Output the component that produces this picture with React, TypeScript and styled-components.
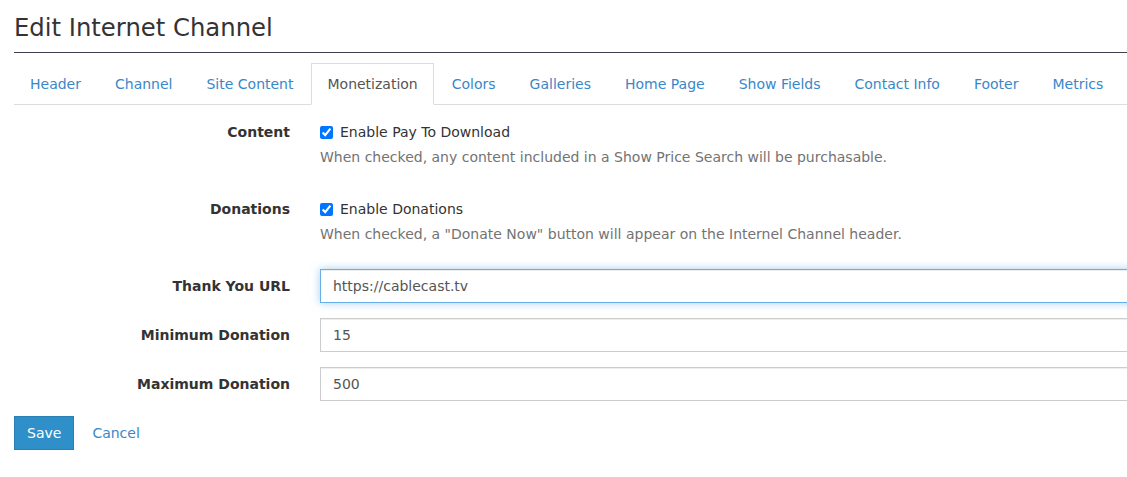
import React, { useEffect, useRef } from "react";
import styled, { createGlobalStyle } from "styled-components";

const GlobalStyle = createGlobalStyle`
  html, body {
    margin: 0;
    padding: 0;
    overflow: hidden;
    background: #fff;
  }
  body {
    font-family: "DejaVu Sans", Verdana, sans-serif;
    font-size: 14px;
    line-height: 20px;
    color: #333;
  }
`;

const tabs = [
  "Header",
  "Channel",
  "Site Content",
  "Monetization",
  "Colors",
  "Galleries",
  "Home Page",
  "Show Fields",
  "Contact Info",
  "Footer",
  "Metrics",
];

const Page = styled.div`
  width: 1180px;
  padding: 0 0 0 14px;
`;

const Title = styled.h1`
  margin: 0;
  padding: 14px 0 10px;
  font-size: 24.3px;
  line-height: 28px;
  font-weight: normal;
  color: #333;
  border-bottom: 1px solid #3f3f4d;
`;

const TabList = styled.ul`
  display: flex;
  list-style: none;
  margin: 10px 0 0;
  padding: 0;
  border-bottom: 1px solid #ddd;
`;

const Tab = styled.li<{ $active?: boolean }>`
  margin: 0 2px -1px 0;
  padding: 10px 15px;
  border: 1px solid ${(p) => (p.$active ? "#ddd" : "transparent")};
  border-bottom-color: ${(p) => (p.$active ? "#fff" : "transparent")};
  background: ${(p) => (p.$active ? "#fff" : "transparent")};
  color: ${(p) => (p.$active ? "#555" : "#3a87c8")};
  white-space: nowrap;
`;

const Form = styled.form`
  padding-top: 17px;
`;

const Row = styled.div<{ $gap: number }>`
  display: grid;
  grid-template-columns: 276px 1fr;
  column-gap: 30px;
  align-items: start;
  margin-bottom: ${(p) => p.$gap}px;
`;

const Label = styled.label<{ $input?: boolean }>`
  text-align: right;
  font-weight: bold;
  font-size: 14px;
  padding-top: ${(p) => (p.$input ? "7px" : "0")};
  line-height: 20px;
`;

const CheckLine = styled.label`
  display: flex;
  align-items: center;
  gap: 7px;
`;

const Check = styled.input`
  width: 13px;
  height: 13px;
  margin: 0;
`;

const Help = styled.div`
  margin-top: 5px;
  color: #737373;
`;

const TextInput = styled.input<{ $focused?: boolean }>`
  box-sizing: border-box;
  width: 100%;
  height: 34px;
  padding: 6px 12px;
  font: inherit;
  color: #555;
  border: 1px solid ${(p) => (p.$focused ? "#66afe9" : "#ccc")};
  border-radius: 0;
  outline: none;
  box-shadow: ${(p) =>
    p.$focused
      ? "inset 0 1px 1px rgba(0,0,0,.075), 0 0 8px rgba(102,175,233,.6)"
      : "inset 0 1px 1px rgba(0,0,0,.075)"};
`;

const Actions = styled.div`
  display: flex;
  align-items: center;
  gap: 18px;
`;

const SaveButton = styled.button`
  height: 34px;
  padding: 6px 12px;
  font: inherit;
  color: #fff;
  background: #2f8fc8;
  border: 1px solid #2a7fb3;
  border-radius: 0;
`;

const CancelLink = styled.a`
  color: #3a87c8;
  text-decoration: none;
`;

export default function App() {
  const urlRef = useRef<HTMLInputElement>(null);

  useEffect(() => {
    const el = urlRef.current;
    if (!el) return;
    el.focus({ preventScroll: true });
    el.setSelectionRange(el.value.length, el.value.length);
    window.scrollTo(0, 0);
  }, []);

  return (
    <>
      <GlobalStyle />
      <Page>
        <Title>Edit Internet Channel</Title>
        <TabList>
          {tabs.map((t) => (
            <Tab key={t} $active={t === "Monetization"}>
              {t}
            </Tab>
          ))}
        </TabList>
        <Form onSubmit={(e) => e.preventDefault()}>
          <Row $gap={32}>
            <Label>Content</Label>
            <div>
              <CheckLine>
                <Check type="checkbox" defaultChecked />
                Enable Pay To Download
              </CheckLine>
              <Help>When checked, any content included in a Show Price Search will be purchasable.</Help>
            </div>
          </Row>
          <Row $gap={25}>
            <Label>Donations</Label>
            <div>
              <CheckLine>
                <Check type="checkbox" defaultChecked />
                Enable Donations
              </CheckLine>
              <Help>When checked, a "Donate Now" button will appear on the Internel Channel header.</Help>
            </div>
          </Row>
          <Row $gap={15}>
            <Label $input>Thank You URL</Label>
            <TextInput ref={urlRef} $focused defaultValue="https://cablecast.tv" />
          </Row>
          <Row $gap={15}>
            <Label $input>Minimum Donation</Label>
            <TextInput defaultValue="15" />
          </Row>
          <Row $gap={15}>
            <Label $input>Maximum Donation</Label>
            <TextInput defaultValue="500" />
          </Row>
          <Actions>
            <SaveButton type="submit">Save</SaveButton>
            <CancelLink href="#">Cancel</CancelLink>
          </Actions>
        </Form>
      </Page>
    </>
  );
}
